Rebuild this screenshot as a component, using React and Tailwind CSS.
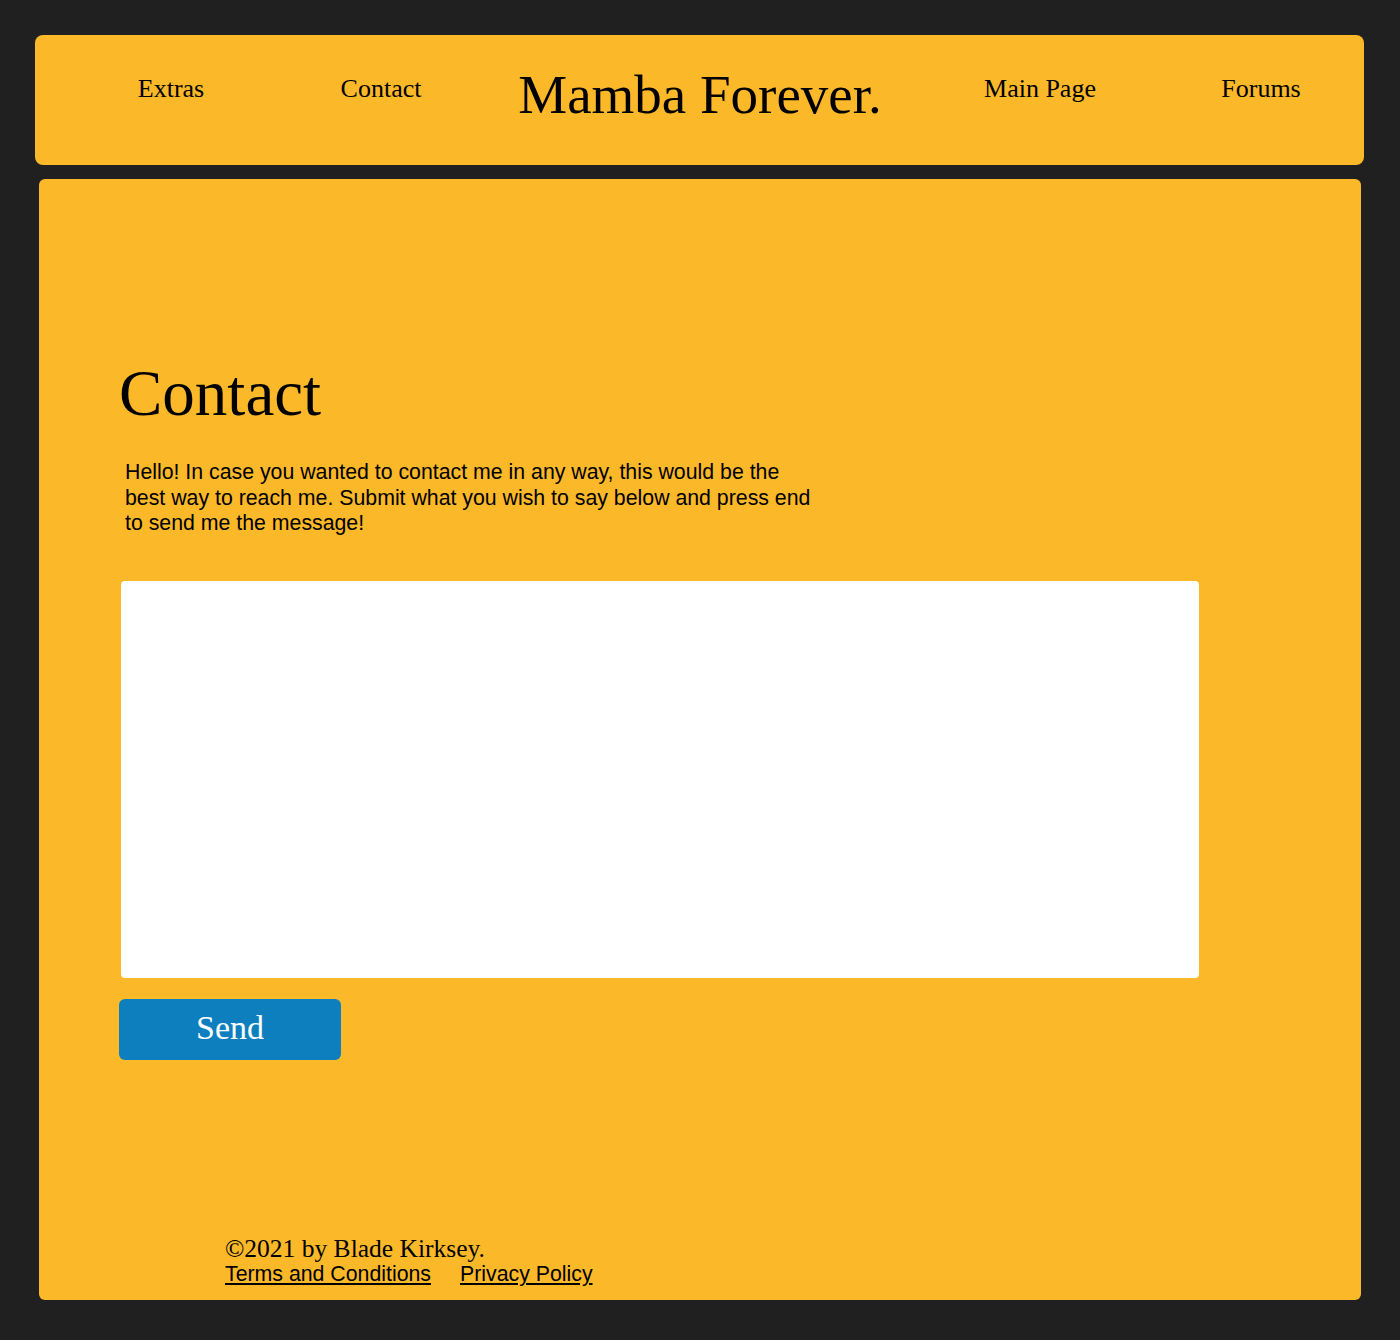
import React from 'react';

const serif = "font-['Liberation_Serif',serif]";
const sans = "font-['Liberation_Sans',Arial,sans-serif]";

function NavItem({ label, className = '' }) {
  return (
    <a href="#" className={`${serif} block w-[140px] text-center text-[26px] leading-[26px] text-black ${className}`}>
      {label}
    </a>
  );
}

export default function App() {
  return (
    <div className="min-h-[1340px] w-[1400px] bg-[#202020] px-[35px] pt-[35px] pb-[39px]">
      {/* header */}
      <header className="flex h-[130px] w-[1329px] items-start rounded-lg bg-[#fbb829]">
        <NavItem label="Extras" className="ml-[66px] mt-[41px]" />
        <NavItem label="Contact" className="ml-[70px] mt-[41px]" />
        <h1 className={`${serif} ml-[59px] mt-[32px] w-[380px] text-center text-[55px] leading-[55px] text-black`}>
          Mamba Forever.
        </h1>
        <NavItem label="Main Page" className="ml-[80px] mt-[41px]" />
        <NavItem label="Forums" className="ml-[81px] mt-[41px]" />
      </header>

      {/* main */}
      <main className="ml-[4px] mt-[14px] flex h-[1121px] w-[1322px] flex-col rounded-md bg-[#fbb829]">
        <div className="pl-[80px] pt-[175px]">
          <h2 className={`${serif} text-[65px] leading-[78px] text-black`}>Contact</h2>

          <p className={`${sans} ml-[6px] mt-[28px] w-[690px] text-[21.3px] leading-[25.5px] text-black`}>
            Hello! In case you wanted to contact me in any way, this would be the best way to reach me. Submit what you
            wish to say below and press end to send me the message!
          </p>

          <textarea className="ml-[2px] mt-[44px] block h-[397px] w-[1078px] resize-none rounded bg-white p-3 outline-none" />

          <button className={`${serif} mt-[21px] flex h-[61px] w-[222px] items-center justify-center rounded-md bg-[#0d7fbe] pb-[4px] text-[34px] text-white`}>
            Send
          </button>
        </div>

        <footer className="mt-auto pb-[15px] pl-[186px]">
          <p className={`${serif} text-[25.5px] leading-[24px] text-black`}>©2021 by Blade Kirksey.</p>
          <div className={`${sans} mt-[2px] flex gap-[29px] text-[21.3px] leading-[22px] text-black`}>
            <a href="#" className="underline">Terms and Conditions</a>
            <a href="#" className="underline">Privacy Policy</a>
          </div>
        </footer>
      </main>
    </div>
  );
}
